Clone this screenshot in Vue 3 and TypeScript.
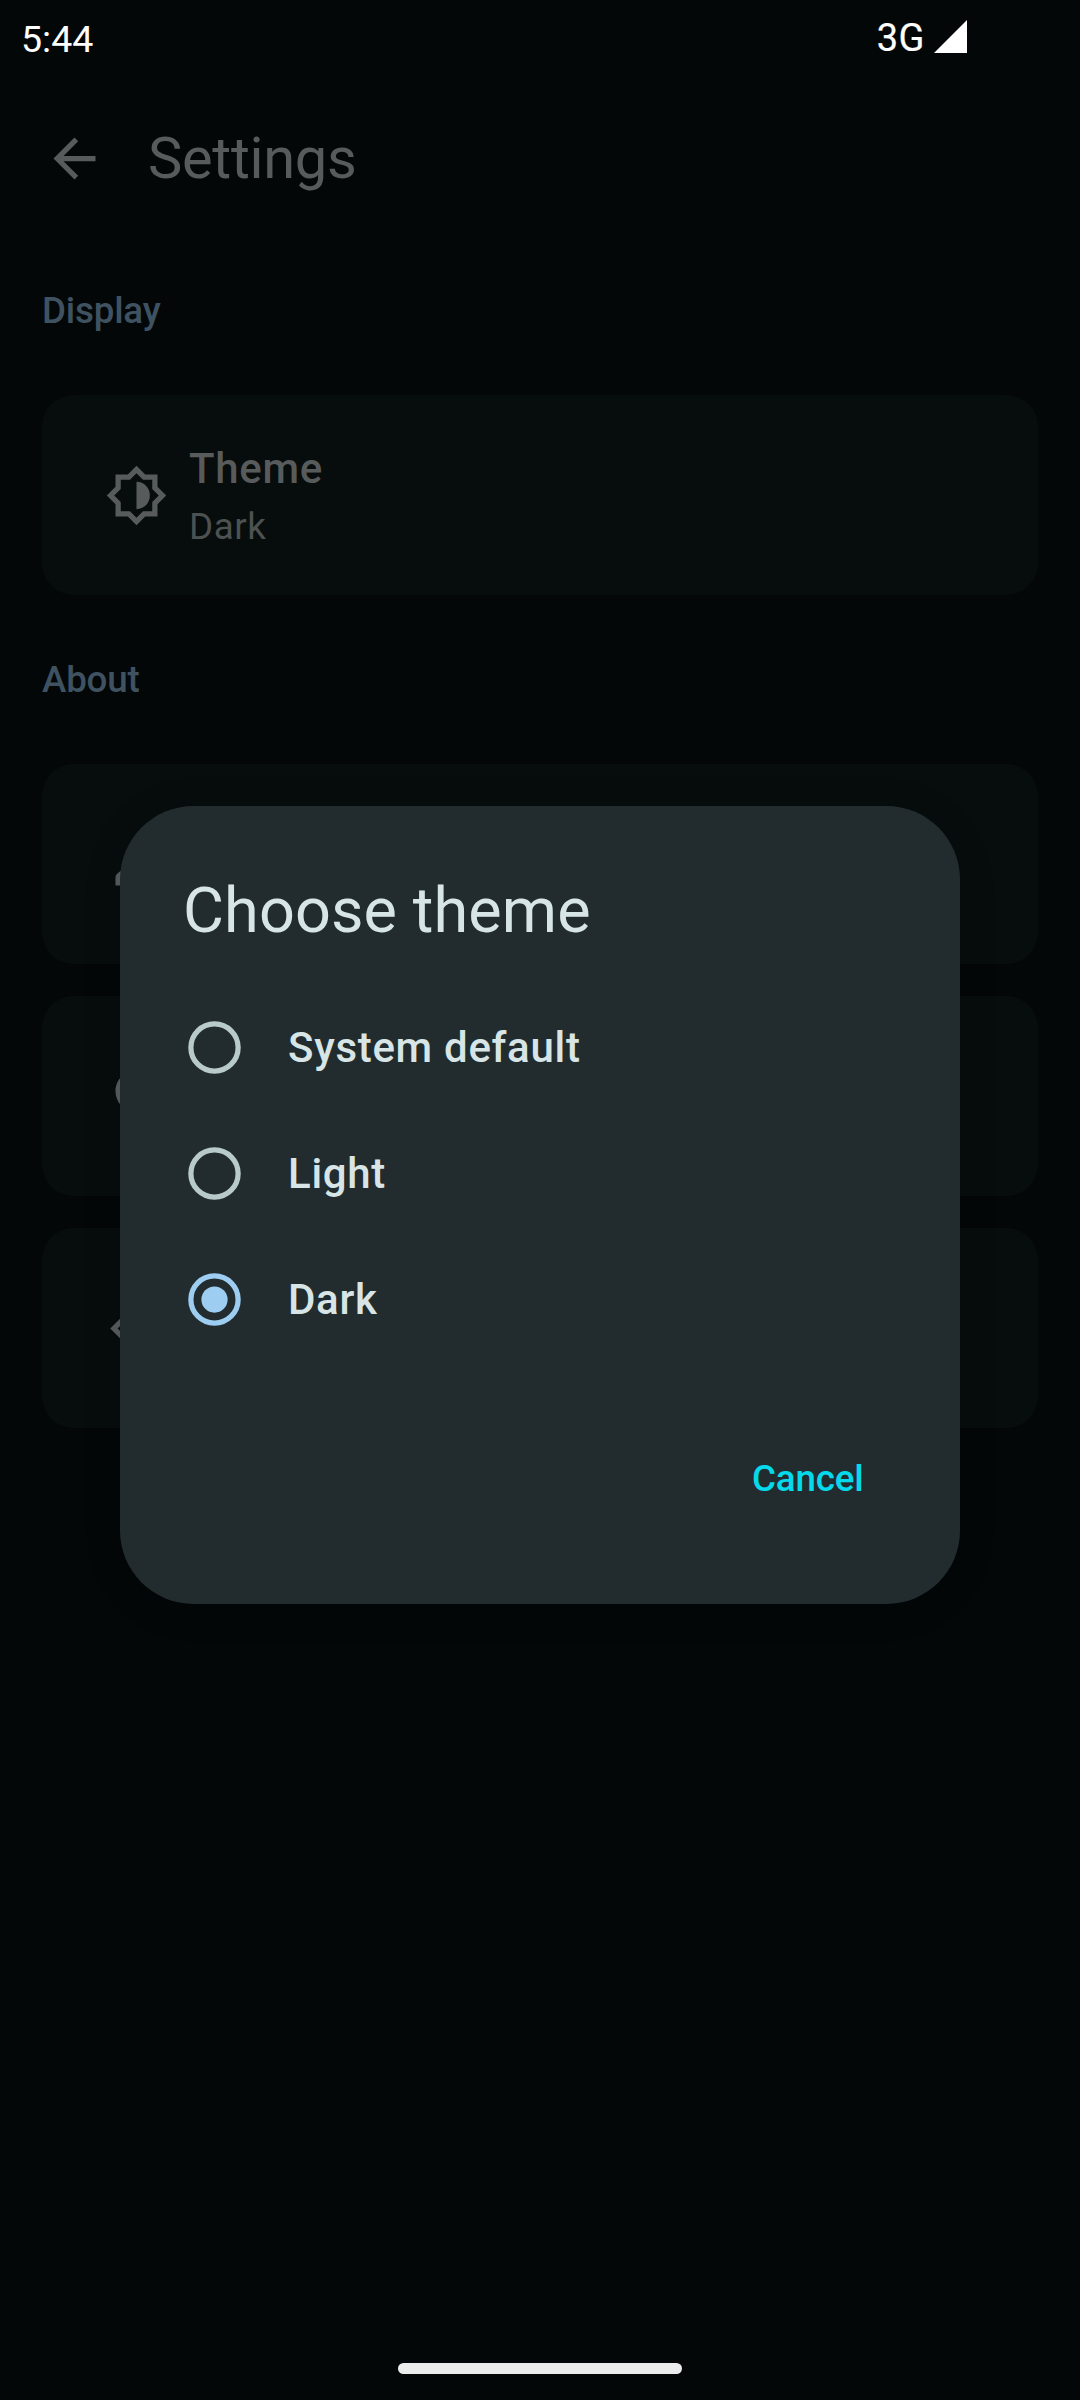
<script setup lang="ts">
import { ref } from 'vue'

interface AboutItem {
  id: string
  path: string
}

const options: string[] = ['System default', 'Light', 'Dark']
const selected = ref<string>('Dark')

const themeIcon =
  'M20 15.31L23.31 12 20 8.69V4h-4.69L12 .69 8.69 4H4v4.69L.69 12 4 15.31V20h4.69L12 23.31 15.31 20H20v-4.69zm-2-.83V18h-3.52L12 20.48 9.52 18H6v-3.52L3.52 12 6 9.52V6h3.52L12 3.52 14.48 6H18v3.52L20.48 12 18 14.48zM12 6.8v10.4c2.87 0 5.1-2.33 5.1-5.2s-2.23-5.2-5.1-5.2z'

const about: AboutItem[] = [
  {
    id: 'author',
    path: 'M12 5.9a2.1 2.1 0 1 1 0 4.2 2.1 2.1 0 0 1 0-4.2m0 9c2.97 0 6.1 1.46 6.1 2.1v1.1H5.9V17c0-.64 3.13-2.1 6.1-2.1M12 4C9.79 4 8 5.79 8 8s1.79 4 4 4 4-1.79 4-4-1.79-4-4-4zm0 9c-2.67 0-8 1.34-8 4v3h16v-3c0-2.66-5.33-4-8-4z',
  },
  {
    id: 'license',
    path: 'M9.68 13.69L12 11.93l2.31 1.76-.88-2.85L15.75 9h-2.84L12 6.19 11.09 9H8.25l2.31 1.84-.88 2.85zM20 10c0-4.42-3.58-8-8-8s-8 3.58-8 8c0 2.03.76 3.87 2 5.28V23l6-2 6 2v-7.72c1.24-1.41 2-3.25 2-5.28zm-8-6c3.31 0 6 2.69 6 6s-2.69 6-6 6-6-2.69-6-6 2.69-6 6-6z',
  },
  {
    id: 'source',
    path: 'M9.4 16.6L4.8 12l4.6-4.6L8 6l-6 6 6 6 1.4-1.4zm5.2 0l4.6-4.6-4.6-4.6L16 6l6 6-6 6-1.4-1.4z',
  },
]
</script>

<template>
  <div class="screen">
    <header class="status">
      <span class="clock">5:44</span>
      <span class="network">3G</span>
      <svg class="signal" viewBox="0 0 33 33"><path d="M33 0V33H0Z" fill="#fff" /></svg>
    </header>

    <div class="appbar">
      <svg class="icon" viewBox="0 0 24 24">
        <path d="M20 11H7.83l5.59-5.59L12 4l-8 8 8 8 1.41-1.41L7.83 13H20v-2z" />
      </svg>
      <h1>Settings</h1>
    </div>

    <main>
      <h2>Display</h2>
      <section class="card">
        <svg class="icon" viewBox="0 0 24 24"><path :d="themeIcon" /></svg>
        <div class="card-text">
          <div class="card-title">Theme</div>
          <div class="card-sub">{{ selected }}</div>
        </div>
      </section>
      <h2 class="second">About</h2>
      <div class="cards">
        <section v-for="item in about" :key="item.id" class="card">
          <svg class="icon" viewBox="0 0 24 24"><path fill-rule="evenodd" :d="item.path" /></svg>
        </section>
      </div>
    </main>

    <div class="overlay">
      <div class="dialog" role="dialog">
        <h3>Choose theme</h3>
        <div class="options">
          <div
            v-for="name in options"
            :key="name"
            class="option"
            :class="{ on: name === selected }"
            @click="selected = name"
          >
            <svg class="radio" viewBox="0 0 24 24">
              <circle cx="12" cy="12" r="9" fill="none" stroke="currentColor" stroke-width="2" />
              <circle v-if="name === selected" cx="12" cy="12" r="5" fill="currentColor" />
            </svg>
            <span class="label">{{ name }}</span>
          </div>
        </div>
        <div class="actions"><button type="button">Cancel</button></div>
      </div>
    </div>
    <div class="home"></div>
  </div>
</template>

<style>
body {
  margin: 0;
  background: #030708;
}
</style>

<style scoped>
.screen {
  position: relative;
  box-sizing: border-box;
  width: 1080px;
  height: 2400px;
  overflow: hidden;
  background: #030708;
  font-family: Roboto, sans-serif;
  color: #575b5b;
}
h1,
h2,
h3 {
  margin: 0;
}
.status {
  display: flex;
  height: 74px;
  box-sizing: border-box;
  padding: 20px 113px 0 21px;
  color: #fff;
  font-size: 37.5px;
  line-height: 38px;
}
.network {
  margin-left: auto;
  padding-right: 9px;
  font-size: 38px;
  line-height: 36px;
  letter-spacing: 0.5px;
  -webkit-text-stroke: 0.2px #fff;
}
.signal {
  width: 33px;
  height: 33px;
}
.appbar {
  display: flex;
  align-items: center;
  height: 168px;
  padding-left: 43px;
}
.icon {
  flex: none;
  width: 63px;
  height: 63px;
  fill: currentColor;
}
h1 {
  margin-left: 42px;
  font-size: 57.75px;
  font-weight: 400;
  line-height: 74px;
  letter-spacing: -0.3px;
}
main {
  padding: 42px 42px 0;
}
h2 {
  height: 53px;
  margin-bottom: 58px;
  color: #3f5261;
  font-size: 36.75px;
  font-weight: 500;
  line-height: 53px;
  letter-spacing: -0.2px;
}
h2.second {
  margin-top: 58px;
}
.cards {
  display: flex;
  flex-direction: column;
  gap: 32px;
}
.card {
  display: flex;
  align-items: center;
  height: 200px;
  box-sizing: border-box;
  padding-left: 63px;
  border-radius: 31.5px;
  background: #070c0c;
}
.card-text {
  margin-left: 21px;
}
.card-title {
  font-size: 42px;
  font-weight: 500;
  height: 63px;
  line-height: 61px;
  letter-spacing: 0.7px;
}
.card-sub {
  color: #4c5151;
  font-size: 36.75px;
  line-height: 52px;
  letter-spacing: 0.6px;
}
.overlay {
  position: absolute;
  inset: 0;
  display: flex;
  justify-content: center;
  align-items: center;
  padding-top: 10px;
}
.dialog {
  width: 840px;
  height: 798px;
  box-sizing: border-box;
  padding: 63px;
  border-radius: 73.5px;
  background: #222c2e;
  box-shadow: 0 4px 40px rgba(0, 0, 0, 0.1);
  color: #d8e5e6;
}
h3 {
  font-size: 63px;
  font-weight: 400;
  line-height: 84px;
  letter-spacing: 0.1px;
}
.options {
  margin-top: 31px;
}
.option {
  display: flex;
  align-items: center;
  height: 126px;
}
.radio {
  width: 63px;
  height: 63px;
  color: #b9cacb;
}
.on .radio {
  color: #9ecdf2;
}
.label {
  margin-left: 42px;
  font-size: 42px;
  font-weight: 500;
  letter-spacing: 0.7px;
}
.actions {
  display: flex;
  justify-content: flex-end;
  margin-top: 90px;
}
button {
  padding: 0 33.5px;
  border: 0;
  background: none;
  color: #04daec;
  font: 500 36.75px/53px Roboto, sans-serif;
  letter-spacing: -0.15px;
}
.home {
  position: absolute;
  left: 398px;
  bottom: 26px;
  width: 284px;
  height: 11px;
  border-radius: 6px;
  background: #ebedec;
}
</style>
